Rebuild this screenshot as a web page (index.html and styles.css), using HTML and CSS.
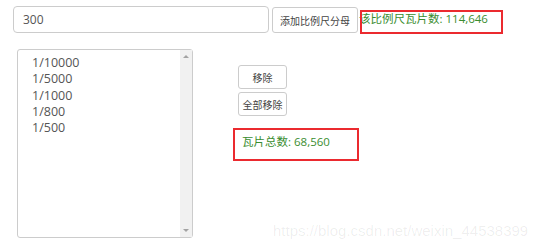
FILE: index.html
```html
<!DOCTYPE html>
<html lang="zh-CN">
<head>
    <meta charset="UTF-8">
    <title>比例尺瓦片统计</title>
    <link rel="stylesheet" href="styles.css">
</head>
<body>
    <div class="page">
        <div class="top-row">
            <input class="scale-input" type="text" value="300">
            <button class="btn add-btn">添加比例尺分母</button>
            <span class="count-label">该比例尺瓦片数: 114,646</span>
        </div>
        <div class="main-row">
            <div class="listbox">
                <div class="list-items">
                    <div class="item">1/10000</div>
                    <div class="item">1/5000</div>
                    <div class="item">1/1000</div>
                    <div class="item">1/800</div>
                    <div class="item">1/500</div>
                </div>
                <div class="scrollbar">
                    <span class="arrow up"></span>
                    <span class="arrow down"></span>
                </div>
            </div>
            <div class="side">
                <button class="btn side-btn">移除</button>
                <button class="btn side-btn">全部移除</button>
                <span class="total-label">瓦片总数: 68,560</span>
            </div>
        </div>

        <!-- 标注框 -->
        <div class="mark mark-one"></div>
        <div class="mark mark-two"></div>
        <div class="watermark">https://blog.csdn.net/weixin_44538399</div>
    </div>
</body>
</html>
```

FILE: styles.css
```css
body {
    margin: 0;
    background: #fff;
    font-family: "Open Sans", "Noto Sans CJK SC", sans-serif;
    font-size: 12px;
    color: #555;
}
.page {
    position: relative;
    width: 554px;
    height: 250px;
    overflow: hidden;
}
.top-row {
    display: flex;
    align-items: flex-start;
    padding: 6px 0 0 13px;
}
.scale-input {
    box-sizing: border-box;
    width: 256px;
    height: 27px;
    border: 1px solid #ccc;
    border-radius: 4px;
    padding: 0 9px;
    font-family: inherit;
    font-size: 12px;
    color: #555;
    outline: none;
}
.btn {
    box-sizing: border-box;
    border: 1px solid #ccc;
    border-radius: 3px;
    background: #fff;
    color: #444;
    font-family: inherit;
    font-size: 10px;
    padding: 0;
    cursor: pointer;
}
.add-btn {
    width: 86px;
    height: 26px;
    margin: 1px 0 0 3px;
}
.count-label {
    margin: 5px 0 0 1px;
    color: #3a8d2f;
    font-size: 11.5px;
    line-height: 16px;
    white-space: nowrap;
}
.main-row {
    display: flex;
    align-items: flex-start;
    margin-top: 16px;
    padding-left: 17px;
}
.listbox {
    box-sizing: border-box;
    display: flex;
    width: 176px;
    height: 189px;
    border: 1px solid #ccc;
    border-radius: 3px;
}
.list-items {
    flex: 1;
    padding: 5px 0 0 14px;
}
.item {
    line-height: 16.3px;
    font-size: 12.5px;
    color: #555;
}
.scrollbar {
    position: relative;
    width: 12px;
    background: #f1f1f1;
}
.arrow {
    position: absolute;
    left: 3px;
    width: 0;
    height: 0;
    border-left: 3px solid transparent;
    border-right: 3px solid transparent;
}
.arrow.up {
    top: 5px;
    border-bottom: 3px solid #a3a3a3;
}
.arrow.down {
    bottom: 5px;
    border-top: 3px solid #a3a3a3;
}
.side {
    display: flex;
    flex-direction: column;
    align-items: flex-start;
    margin: 16px 0 0 45px;
}
.side-btn {
    width: 49px;
    height: 24px;
    margin-bottom: 3px;
}
.total-label {
    margin: 15px 0 0 4px;
    color: #3a8d2f;
    font-size: 11.5px;
    line-height: 16px;
    white-space: nowrap;
}
.mark {
    position: absolute;
    box-sizing: border-box;
    border: 2px solid #eb2a2f;
}
.mark-one {
    left: 360px;
    top: 10px;
    width: 143px;
    height: 24px;
}
.mark-two {
    left: 233px;
    top: 128px;
    width: 126px;
    height: 33px;
}
.watermark {
    position: absolute;
    left: 273px;
    top: 222px;
    font-family: "Liberation Sans", sans-serif;
    font-size: 15px;
    color: rgba(0, 0, 0, 0.07);
    white-space: nowrap;
}
```
